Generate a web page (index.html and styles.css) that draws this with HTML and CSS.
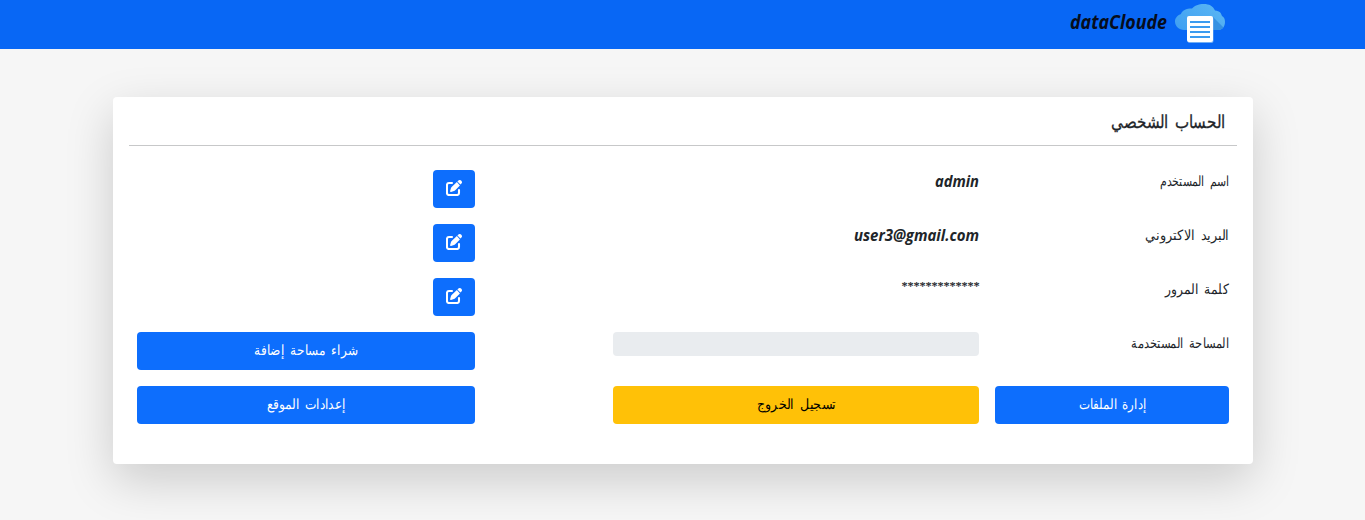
FILE: index.html
```html
<!DOCTYPE html>
<html lang="ar" dir="rtl">
<head>
<meta charset="utf-8">
<title>dataCloude</title>
<link rel="stylesheet" href="styles.css">
</head>
<body>
<svg width="0" height="0" class="sprite" aria-hidden="true">
  <symbol id="edit" viewBox="0 0 512 512">
    <path fill="currentColor" d="M490 22l-10-8c-27-23-62-17-83 4l-32 32 97 97 32-32c27-27 23-66-4-93zM348 66L180 225c-9 9-16 20-20 33l-28 94c-6 17 11 34 28 28l94-28c13-4 24-11 33-20l158-159z"/>
    <path fill="none" stroke="currentColor" stroke-width="66" stroke-linecap="round" stroke-linejoin="round" d="M192 96H96c-36 0-65 29-65 65v255c0 36 29 65 65 65h255c36 0 65-29 65-65v-96"/>
  </symbol>
</svg>
<header class="navbar">
  <a class="brand">
    <svg class="logo" width="50" height="40" viewBox="0 0 50 40">
      <defs>
        <linearGradient id="sky" x1="0" y1="1" x2="1" y2="0"><stop offset="0.2" stop-color="#3f9ff2"/><stop offset="1" stop-color="#5cb8f3"/></linearGradient>
        <clipPath id="cloud"><path d="M9 26C4 26 0 22 0 17.500C0 13.500 3 11 6 10C7 6.500 11 4.500 17 4.500C20 1.500 23 0 29 0C34 0 38 2 40 6.500C45 7 46 9 47 12C49 13 50 15 50 18C50 23 47 26 43 26Z"/></clipPath>
      </defs>
      <g clip-path="url(#cloud)"><path fill="url(#sky)" d="M0 0h50v40H0z"/><path fill="#3490e2" d="M38 13l10 10v4H38z"/></g>
      <rect x="12.500" y="13" width="26" height="26" rx="2" fill="#70aef6"/>
      <rect x="12" y="12" width="26" height="26" rx="2" fill="#fff"/>
      <path stroke="#3b9bef" stroke-width="2" d="M15 18h20M15 23h20M15 28h20M15 33h20"/>
    </svg>
    <svg class="brand-name" width="98" height="34" direction="ltr"><text class="hand" x="0" y="23" textLength="97" lengthAdjust="spacingAndGlyphs">dataCloude</text></svg>
  </a>
</header>
<main class="card">
  <h1 class="title"><svg width="114" height="30"><text class="arabic" x="114" y="18" textLength="114" lengthAdjust="spacingAndGlyphs">الحساب الشخصي</text></svg></h1>
  <div class="grid">
    <div><svg width="69" height="28"><text class="arabic" x="69" y="16" textLength="69" lengthAdjust="spacingAndGlyphs">اسم المستخدم</text></svg></div>
    <div><svg class="value" width="126" height="28" direction="ltr"><text class="hand" x="82" y="17" textLength="44" lengthAdjust="spacingAndGlyphs">admin</text></svg></div>
    <div class="action"><button class="btn icon-btn"><svg width="16" height="16"><use href="#edit"/></svg></button></div>
    <div><svg width="84" height="28"><text class="arabic" x="84" y="16" textLength="84" lengthAdjust="spacingAndGlyphs">البريد الاكتروني</text></svg></div>
    <div><svg class="value" width="126" height="28" direction="ltr"><text class="hand" x="1" y="17" textLength="125" lengthAdjust="spacingAndGlyphs">user3@gmail.com</text></svg></div>
    <div class="action"><button class="btn icon-btn"><svg width="16" height="16"><use href="#edit"/></svg></button></div>
    <div><svg width="64" height="28"><text class="arabic" x="64" y="16" textLength="64" lengthAdjust="spacingAndGlyphs">كلمة المرور</text></svg></div>
    <div class="password">*************</div>
    <div class="action"><button class="btn icon-btn"><svg width="16" height="16"><use href="#edit"/></svg></button></div>
    <div><svg width="98" height="28"><text class="arabic" x="98" y="16" textLength="98" lengthAdjust="spacingAndGlyphs">المساحة المستخدمة</text></svg></div>
    <div class="progress"></div>
    <button class="btn"><svg width="104" height="24"><text class="arabic" x="104" y="16" textLength="104" lengthAdjust="spacingAndGlyphs">شراء مساحة إضافة</text></svg></button>
    <button class="btn"><svg width="67" height="24"><text class="arabic" x="67" y="16" textLength="67" lengthAdjust="spacingAndGlyphs">إدارة الملفات</text></svg></button>
    <button class="btn warning"><svg width="79" height="24"><text class="arabic" x="79" y="16" textLength="79" lengthAdjust="spacingAndGlyphs">تسجيل الخروج</text></svg></button>
    <button class="btn"><svg width="78" height="24"><text class="arabic" x="78" y="16" textLength="78" lengthAdjust="spacingAndGlyphs">إعدادات الموقع</text></svg></button>
  </div>
</main>
</body>
</html>
```
FILE: styles.css
```css
* { box-sizing: border-box; }
body { margin: 0; min-height: 520px; overflow: hidden; background: #f6f6f6; color: #212529; font: 16px/24px "Liberation Serif", serif; }
svg { display: block; overflow: visible; }
.navbar { height: 49px; background: #0867f5; padding: 4px 140px 0; }
.brand { display: flex; gap: 7px; color: #060d1c; }
.brand-name { margin-top: 2px; }
.hand { font: italic 700 16px "Open Sans", sans-serif; fill: currentColor; }
.brand-name .hand { font-size: 20px; }
.arabic { font-size: 14px; word-spacing: 3px; fill: currentColor; }
.title .arabic { font-size: 18px; stroke: currentColor; stroke-width: .3px; }
.card { width: 1140px; height: 367px; margin: 48px 112px 0 113px; padding: 0 16px; background: #fff; border-radius: 4px; box-shadow: 0 16px 48px rgba(0,0,0,.176); }
.title { margin: 0; height: 49px; padding: 13px 12px 0; border-bottom: 1px solid #c7c8c9; font-size: 20px; line-height: 24px; font-weight: 400; }
.grid { display: grid; grid-template-columns: 234px 366px 338px; grid-auto-rows: 38px; column-gap: 16px; row-gap: 16px; padding: 24px 8px 0; }
.grid > :nth-child(3n) { margin-right: 122px; width: 338px; }
.action { display: flex; justify-content: flex-start; }
.password { font: italic 12px/24px "Liberation Serif", serif; margin-top: -4px; -webkit-text-stroke: .2px currentColor; }
.btn { border: 0; border-radius: 4px; background: #0d6efd; color: #fff; font: inherit; padding: 0 12px; display: grid; place-items: center; }
.icon-btn { width: 42px; height: 38px; padding-bottom: 2px; }
.warning { background: #ffc107; color: #000; }
.progress { height: 24px; border-radius: 4px; background: #e9ecef; }
```
